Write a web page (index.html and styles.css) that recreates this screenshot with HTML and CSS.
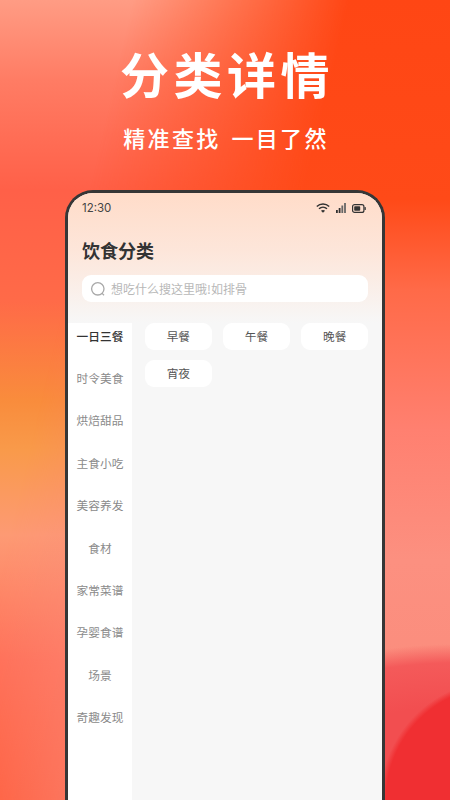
FILE: index.html
```html
<!DOCTYPE html>
<html lang="zh-CN">
<head>
<meta charset="utf-8">
<title>分类详情</title>
<link rel="stylesheet" href="styles.css">
</head>
<body>
<main class="poster">
  <h1 class="headline">分类详情</h1>
  <p class="tagline"><span>精准查找</span><span>一目了然</span></p>
  <section class="phone">
    <header class="top">
      <div class="status">
        <span class="time">12:30</span>
        <span class="status-icons">
          <svg width="14" height="10" viewBox="0 0 14 10"><path d="M.8 3.500C4.300.3 9.700.3 13.200 3.500" fill="none" stroke="#333" stroke-width="1.500"/><path d="M3 5.700c2.300-2 5.700-2 8 0" fill="none" stroke="#333" stroke-width="1.500"/><path d="M4.900 7.700c1.300-1 2.900-1 4.200 0L7 9.800z" fill="#333"/></svg>
          <svg width="10" height="10" viewBox="0 0 10 10"><rect x="0" y="7" width="1.800" height="3" fill="#333"/><rect x="2.700" y="5" width="1.800" height="5" fill="#333"/><rect x="5.400" y="2.500" width="1.800" height="7.500" fill="#666"/><rect x="8.100" y="0" width="1.800" height="10" fill="#666"/></svg>
          <svg width="14" height="9" viewBox="0 0 14 9"><rect x=".6" y=".6" width="11.300" height="7.800" rx="2" fill="none" stroke="#333" stroke-width="1.200"/><rect x="2.200" y="2.200" width="6" height="4.600" rx=".8" fill="#333"/><rect x="12.500" y="3" width="1.300" height="3" rx=".6" fill="#333"/></svg>
        </span>
      </div>
      <h2 class="title">饮食分类</h2>
      <div class="search">
        <svg class="search-icon" width="16" height="16" viewBox="0 0 16 16"><circle cx="7.800" cy="7.800" r="6.200" fill="none" stroke="#a8a8a8" stroke-width="1.300"/><path d="M12.100 12.400l1.900 1.800" stroke="#a8a8a8" stroke-width="1.300" fill="none"/></svg>
        <span>想吃什么搜这里哦!如排骨</span>
      </div>
    </header>
    <div class="body">
      <nav class="side">
        <a class="cat active">一日三餐</a>
        <a class="cat">时令美食</a>
        <a class="cat">烘焙甜品</a>
        <a class="cat">主食小吃</a>
        <a class="cat">美容养发</a>
        <a class="cat">食材</a>
        <a class="cat">家常菜谱</a>
        <a class="cat">孕婴食谱</a>
        <a class="cat">场景</a>
        <a class="cat">奇趣发现</a>
      </nav>
      <div class="chips">
        <span class="chip">早餐</span>
        <span class="chip">午餐</span>
        <span class="chip">晚餐</span>
        <span class="chip">宵夜</span>
      </div>
    </div>
  </section>
</main>
</body>
</html>
```
FILE: styles.css
```css
* { box-sizing: border-box; }
html, body { margin: 0; padding: 0; }
body {
  width: 450px;
  height: 800px;
  overflow: hidden;
  font-family: "Noto Sans CJK SC", "Noto Sans", sans-serif;
}
.poster {
  position: relative;
  isolation: isolate;
  width: 450px;
  height: 800px;
  overflow: hidden;
  display: flex;
  flex-direction: column;
  align-items: center;
  background: linear-gradient(180deg,
    #ff9c84 0px, #ff7c64 80px, #ff6048 190px, #ff6a48 300px,
    #f98c3c 400px, #f99a4a 450px, #fd9a74 535px, #ff7058 660px, #ff5c3a 800px);
}
.poster::before {
  content: "";
  position: absolute;
  inset: 0;
  z-index: -2;
  background: linear-gradient(180deg,
    #ff4614 0px, #ff4a18 200px, #ff6a48 290px, #ff8070 430px, #fc9080 560px, #fa8a7a 800px);
  -webkit-mask-image: linear-gradient(103deg, transparent 130px, #000 340px);
  mask-image: linear-gradient(103deg, transparent 130px, #000 340px);
}
.poster::after {
  content: "";
  position: absolute;
  inset: 0;
  z-index: -1;
  background:
    radial-gradient(circle 120px at 500px 800px, #f02f32 95%, rgba(240,47,50,0) 100%),
    radial-gradient(ellipse 300px 156px at 460px 800px, #f24e50 60%, #f45a5a 88%, rgba(244,90,90,0) 100%);
}
.headline {
  margin: 39px 0 0;
  height: 68px;
  padding-left: 4px;
  font-size: 49px;
  letter-spacing: 4.500px;
  line-height: 68px;
  font-weight: 700;
  color: #fff;
}
.tagline {
  margin: 13px 0 0;
  height: 34px;
  display: flex;
  gap: 11px;
  padding-left: 2px;
  font-size: 22px;
  letter-spacing: 2.300px;
  line-height: 34px;
  font-weight: 500;
  color: #fff;
}
.phone {
  margin-top: 36px;
  width: 320px;
  flex: 1 0 auto;
  display: flex;
  flex-direction: column;
  border: 3px solid #363636;
  border-bottom: 0;
  border-radius: 28px 28px 0 0;
  overflow: hidden;
  background: #f7f7f7;
}
.top {
  height: 130px;
  flex: none;
  padding: 0 14px;
  background: linear-gradient(180deg, #ffdcc9 0%, #fde6da 45%, #f7f7f7 100%);
}
.status {
  height: 30px;
  display: flex;
  align-items: center;
  justify-content: space-between;
}
.time {
  font-family: "Inter", "Roboto", sans-serif;
  font-size: 11.500px;
  color: #444;
}
.status-icons {
  display: flex;
  align-items: center;
  gap: 6px;
  margin-right: 2px;
}
.status-icons svg { display: block; }
.title {
  margin: 14px 0 0;
  height: 26px;
  font-size: 18px;
  line-height: 26px;
  font-weight: 700;
  color: #333;
}
.search {
  margin-top: 12px;
  height: 27px;
  width: 286px;
  display: flex;
  align-items: center;
  gap: 5px;
  padding-left: 8px;
  background: #fff;
  border-radius: 9px;
  font-size: 12px;
  color: #b8b8b8;
}
.search-icon { display: block; flex: none; }
.body {
  flex: 1;
  display: flex;
  min-height: 0;
}
.side {
  width: 64px;
  flex: none;
  background: #fff;
  display: flex;
  flex-direction: column;
}
.cat {
  height: 42.400px;
  flex: none;
  padding-bottom: 18px;
  display: flex;
  align-items: center;
  justify-content: center;
  font-size: 11.700px;
  color: #8a8a8a;
}
.cat.active {
  color: #333;
  font-weight: 500;
}
.chips {
  flex: 1;
  display: grid;
  grid-template-columns: repeat(3, 1fr);
  grid-auto-rows: 27px;
  column-gap: 11.500px;
  row-gap: 10px;
  align-content: start;
  padding: 0 14px 0 13px;
}
.chip {
  display: flex;
  align-items: center;
  justify-content: center;
  background: #fff;
  border-radius: 9px;
  padding-bottom: 3px;
  font-size: 11.700px;
  color: #555;
}
```
